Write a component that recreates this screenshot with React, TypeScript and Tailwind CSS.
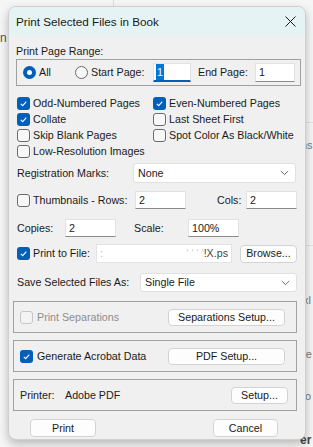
import React from "react";

const font = { fontFamily: '"Liberation Sans", Arial, sans-serif' };

function Check({ checked = false, disabled = false }: { checked?: boolean; disabled?: boolean }) {
  if (checked) {
    return (
      <span className="flex h-[13px] w-[13px] shrink-0 items-center justify-center rounded-[3px] bg-[#005fb8]">
        <svg width="9" height="9" viewBox="0 0 9 9">
          <path d="M1.8 4.8 L3.7 6.6 L7.3 2.6" stroke="white" strokeWidth="1.1" fill="none" />
        </svg>
      </span>
    );
  }
  return (
    <span
      className={
        "h-[13px] w-[13px] shrink-0 rounded-[3px] border " +
        (disabled ? "border-[#c6c6c6] bg-[#f3f3f3]" : "border-[#6b6b6b] bg-[#f7f7f7]")
      }
    />
  );
}

function Radio({ checked = false }: { checked?: boolean }) {
  return checked ? (
    <span className="flex h-[13px] w-[13px] shrink-0 items-center justify-center rounded-full bg-[#005fb8]">
      <span className="h-[5px] w-[5px] rounded-full bg-white" />
    </span>
  ) : (
    <span className="h-[13px] w-[13px] shrink-0 rounded-full border border-[#6b6b6b] bg-[#f7f7f7]" />
  );
}

function Field({ value, className = "" }: { value: string; className?: string }) {
  return (
    <div
      className={
        "flex shrink-0 items-center border border-[#e3e3e3] border-b-[#8a8a8a] bg-white pl-[3px] text-[#1a1a1a] " +
        className
      }
    >
      {value}
    </div>
  );
}

function Select({ value, className = "" }: { value: string; className?: string }) {
  return (
    <div
      className={
        "flex shrink-0 items-center justify-between rounded-[3px] border border-[#e0e0e0] bg-white pl-[4px] pr-[6px] text-[#1a1a1a] " +
        className
      }
    >
      <span>{value}</span>
      <svg width="9" height="6" viewBox="0 0 9 6">
        <path d="M0.8 1 L4.5 4.6 L8.2 1" stroke="#5a5a5a" strokeWidth="0.9" fill="none" />
      </svg>
    </div>
  );
}

function Btn({ label, className = "" }: { label: string; className?: string }) {
  return (
    <div
      className={
        "flex shrink-0 items-center justify-center rounded-[4px] border border-[#d3d3d3] bg-[#fdfdfd] text-[#1a1a1a] " +
        className
      }
    >
      {label}
    </div>
  );
}

export default function App() {
  return (
    <div className="relative h-[447px] w-[313px] overflow-hidden bg-[#f6f6f6]" style={font}>
      {/* background window bits */}
      <div className="absolute left-[113px] top-0 h-[6px] w-px bg-[#dcdcdc]" />
      <div className="absolute left-0 top-[29px] text-[12px] text-[#555]">n</div>
      <div className="absolute left-[301px] top-[137px] text-[11px] text-[#777]">ns</div>
      <div className="absolute left-[303px] top-[292px] text-[11px] text-[#777]">xl</div>
      <div className="absolute left-[302px] top-[346px] text-[11px] text-[#777]">re</div>
      <div className="absolute left-[305px] top-[388px] text-[11px] text-[#777]">o</div>
      <div className="absolute left-[300px] top-[431px] text-[12px] font-bold text-[#444]">er</div>
      <div className="absolute left-[305px] top-[122px] h-px w-[8px] bg-[#e2e2e2]" />
      <div className="absolute left-[305px] top-[245px] h-px w-[8px] bg-[#e2e2e2]" />

      {/* dialog */}
      <div className="relative ml-[8px] mt-[6px] flex h-[434px] w-[298px] flex-col overflow-hidden rounded-[8px] border border-[#cfcfcf] bg-[#f0f0f0] shadow-[0_4px_10px_rgba(0,0,0,0.25)]">
        <div className="flex h-[29px] shrink-0 items-center justify-between bg-[#e6f3f5] pl-[7px] pr-[9px]">
          <span className="text-[11.7px] text-[#1a1a1a]">Print Selected Files in Book</span>
          <svg width="11" height="11" viewBox="0 0 11 11">
            <path d="M0.5 0.5 L10.5 10.5 M10.5 0.5 L0.5 10.5" stroke="#1a1a1a" strokeWidth="1" />
          </svg>
        </div>

        <div className="flex flex-col whitespace-nowrap pl-[7px] text-[10.7px] text-[#1a1a1a]">
          <div className="mt-[8px] flex h-[14px] items-center">Print Page Range:</div>

          <div className="mt-[1px] flex h-[27px] w-[285px] items-center border border-[#a0a0a0] pl-[6px]">
            <Radio checked />
            <span className="ml-[3px] w-[36px] shrink-0">All</span>
            <Radio />
            <span className="ml-[3px] w-[62px] shrink-0">Start Page:</span>
            <div className="flex h-[19px] w-[38px] shrink-0 items-center border border-[#e3e3e3] border-b-2 border-b-[#005fb8] bg-white pl-[2px]">
              <span className="bg-[#0078d7] px-[1px] text-white">1</span>
            </div>
            <span className="ml-[7px] w-[57px] shrink-0">End Page:</span>
            <Field value="1" className="h-[19px] w-[40px]" />
          </div>

          <div className="mt-[9px] grid grid-cols-[136px_1fr] pl-px">
            {[
              ["Odd-Numbered Pages", true, "Even-Numbered Pages", true],
              ["Collate", true, "Last Sheet First", false],
              ["Skip Blank Pages", false, "Spot Color As Black/White", false],
              ["Low-Resolution Images", false, "", false],
            ].map(([a, ac, b, bc], i) => (
              <React.Fragment key={i}>
                <div className="flex h-[16px] items-center gap-[3px]">
                  <Check checked={ac as boolean} />
                  <span>{a as string}</span>
                </div>
                <div className="flex h-[16px] items-center gap-[3px]">
                  {b ? (
                    <>
                      <Check checked={bc as boolean} />
                      <span>{b as string}</span>
                    </>
                  ) : null}
                </div>
              </React.Fragment>
            ))}
          </div>

          <div className="mt-[4px] flex h-[20px] items-center">
            <span className="w-[117px] shrink-0 pl-px">Registration Marks:</span>
            <Select value="None" className="h-[20px] w-[163px]" />
          </div>

          <div className="mt-[8px] flex h-[18px] items-center pl-px">
            <Check />
            <span className="ml-[3px] w-[102px] shrink-0">Thumbnails - Rows:</span>
            <Field value="2" className="h-[18px] w-[51px]" />
            <span className="ml-[31px] w-[29px] shrink-0">Cols:</span>
            <Field value="2" className="h-[18px] w-[51px]" />
          </div>

          <div className="mt-[10px] flex h-[18px] items-center pl-px">
            <span className="w-[48px] shrink-0">Copies:</span>
            <Field value="2" className="h-[18px] w-[51px]" />
            <span className="ml-[18px] w-[54px] shrink-0">Scale:</span>
            <Field value="100%" className="h-[18px] w-[51px]" />
          </div>

          <div className="mt-[7px] flex h-[19px] items-center pl-px">
            <Check checked />
            <span className="ml-[3px] w-[63px] shrink-0">Print to File:</span>
            <div className="flex h-[19px] w-[136px] shrink-0 items-center justify-between border border-[#e3e3e3] bg-white px-[3px]">
              <span className="text-[#bbb]">:</span>
              <span>
                <span className="text-[#ccc]">'    '  '  '</span>
                <span className="text-[#444]">!X.ps</span>
              </span>
            </div>
            <Btn label="Browse..." className="ml-[8px] h-[18px] w-[57px]" />
          </div>

          <div className="mt-[10px] flex h-[19px] items-center pl-px">
            <span className="w-[123px] shrink-0">Save Selected Files As:</span>
            <Select value="Single File" className="h-[19px] w-[157px]" />
          </div>

          <div className="-ml-[3px] mt-[9px] flex h-[32px] w-[284px] items-center border border-[#a0a0a0] pl-[6px]">
            <Check disabled />
            <span className="ml-[4px] w-[131px] shrink-0 text-[#8d8d8d]">Print Separations</span>
            <Btn label="Separations Setup..." className="h-[17px] w-[117px]" />
          </div>

          <div className="-ml-[3px] mt-[7px] flex h-[32px] w-[284px] items-center border border-[#a0a0a0] pl-[6px]">
            <Check checked />
            <span className="ml-[4px] w-[131px] shrink-0">Generate Acrobat Data</span>
            <Btn label="PDF Setup..." className="h-[17px] w-[117px]" />
          </div>

          <div className="-ml-[3px] mt-[7px] flex h-[32px] w-[284px] items-center border border-[#a0a0a0] pl-[6px]">
            <span className="w-[45px] shrink-0">Printer:</span>
            <span className="w-[166px] shrink-0">Adobe PDF</span>
            <Btn label="Setup..." className="h-[17px] w-[57px]" />
          </div>

          <div className="mt-[8px] flex h-[18px] items-center">
            <Btn label="Print" className="ml-[14px] h-[18px] w-[66px] border-[1.5px] border-[#2a6fb0]" />
            <Btn label="Cancel" className="ml-[117px] h-[18px] w-[65px]" />
          </div>
        </div>
      </div>
    </div>
  );
}
